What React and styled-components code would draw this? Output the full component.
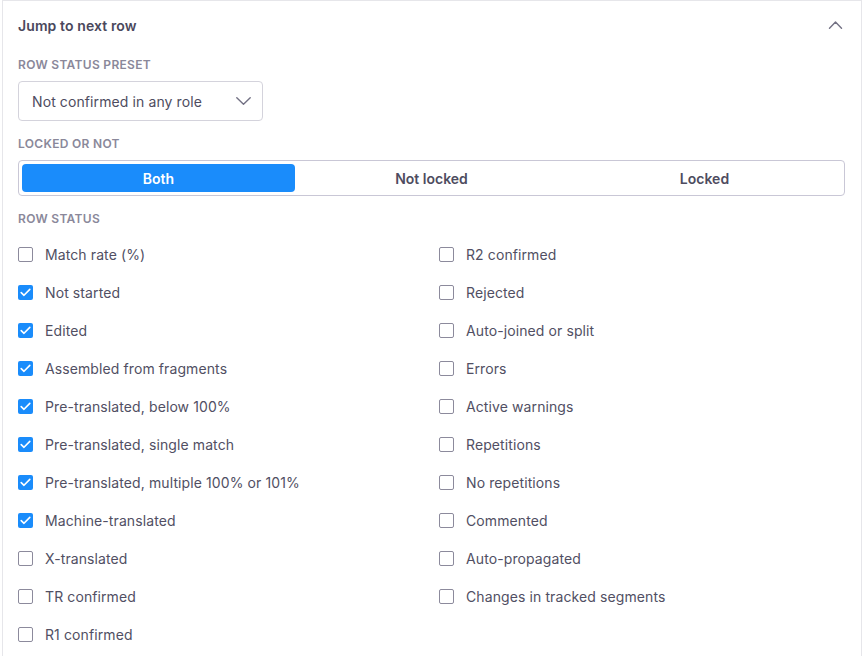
import styled, { createGlobalStyle } from "styled-components";

const GlobalStyle = createGlobalStyle`
  body {
    margin: 0;
    background: #ffffff;
    font-family: Inter, "Noto Sans", "Liberation Sans", sans-serif;
    color: #4e4c60;
  }
`;

const Panel = styled.div`
  margin-left: 2px;
  width: 860px;
  box-sizing: border-box;
  border: 1px solid #e6e6ea;
  border-bottom: none;
  background: #fff;
  padding: 0 16px 20px 15px;
`;

const Header = styled.div`
  height: 48px;
  display: flex;
  align-items: center;
  justify-content: space-between;
`;

const Title = styled.span`
  font-size: 14px;
  font-weight: 600;
  letter-spacing: 0.1px;
  color: #4a485c;
`;

const IconButton = styled.span`
  display: flex;
  align-items: center;
  margin-right: 2px;
`;

const Field = styled.div`
  margin-top: ${(p) => p.$top}px;
`;

const FieldLabel = styled.div`
  font-size: 12px;
  line-height: 16px;
  font-weight: 600;
  letter-spacing: 0.3px;
  text-transform: uppercase;
  color: #8a889a;
  margin-bottom: 8px;
`;

const Select = styled.div`
  width: 245px;
  height: 40px;
  box-sizing: border-box;
  border: 1px solid #d4d3dc;
  border-radius: 4px;
  display: flex;
  align-items: center;
  justify-content: space-between;
  padding: 0 11px 0 13px;
  font-size: 14px;
  letter-spacing: 0.1px;
  color: #4e4c60;
`;

const Toggle = styled.div`
  height: 36px;
  box-sizing: border-box;
  border: 1px solid #c9c7d6;
  border-radius: 4px;
  padding: 3px;
  display: grid;
  grid-template-columns: repeat(3, 1fr);
`;

const ToggleOption = styled.div`
  display: flex;
  align-items: center;
  justify-content: center;
  border-radius: 4px;
  font-size: 14px;
  font-weight: 600;
  background: ${(p) => (p.$active ? "#1a8cfb" : "transparent")};
  color: ${(p) => (p.$active ? "#ffffff" : "#4e4c60")};
`;

const StatusGrid = styled.div`
  display: grid;
  grid-template-columns: 404px 1fr;
  grid-template-rows: repeat(11, 38px);
  grid-auto-flow: column;
  column-gap: 17px;
  margin-top: 3px;
`;

const Option = styled.label`
  display: flex;
  align-items: center;
  font-size: 14px;
  letter-spacing: 0.1px;
  color: #514f63;
`;

const Box = styled.span`
  width: 15px;
  height: 15px;
  box-sizing: border-box;
  border-radius: 2px;
  margin-right: 12px;
  display: flex;
  align-items: center;
  justify-content: center;
  border: ${(p) => (p.$checked ? "none" : "1.5px solid #8c8a9c")};
  background: ${(p) => (p.$checked ? "#1a8cfb" : "#fff")};
`;

const left = [
  ["Match rate (%)", false],
  ["Not started", true],
  ["Edited", true],
  ["Assembled from fragments", true],
  ["Pre-translated, below 100%", true],
  ["Pre-translated, single match", true],
  ["Pre-translated, multiple 100% or 101%", true],
  ["Machine-translated", true],
  ["X-translated", false],
  ["TR confirmed", false],
  ["R1 confirmed", false],
];

const right = [
  "R2 confirmed",
  "Rejected",
  "Auto-joined or split",
  "Errors",
  "Active warnings",
  "Repetitions",
  "No repetitions",
  "Commented",
  "Auto-propagated",
  "Changes in tracked segments",
];

const Chevron = ({ up }) => (
  <svg width="15" height="8" viewBox="0 0 15 8" fill="none">
    <path
      d={up ? "M1.5 7.2L7.5 1L13.5 7.2" : "M0.8 0.8L7.5 7.2L14.2 0.8"}
      stroke="#737184"
      strokeWidth="1.4"
      strokeLinecap="round"
      strokeLinejoin="round"
    />
  </svg>
);

const Checkbox = ({ label, checked }) => (
  <Option>
    <Box $checked={checked}>
      {checked && (
        <svg width="11" height="9" viewBox="0 0 11 9" fill="none">
          <path
            d="M1.2 4.6L4 7.3L9.8 1.4"
            stroke="#fff"
            strokeWidth="1.6"
            strokeLinecap="round"
            strokeLinejoin="round"
          />
        </svg>
      )}
    </Box>
    {label}
  </Option>
);

export default function App() {
  return (
    <>
      <GlobalStyle />
      <Panel>
        <Header>
          <Title>Jump to next row</Title>
          <IconButton>
            <Chevron up />
          </IconButton>
        </Header>

        <Field $top={8}>
          <FieldLabel>Row status preset</FieldLabel>
          <Select>
            Not confirmed in any role
            <Chevron />
          </Select>
        </Field>

        <Field $top={15}>
          <FieldLabel>Locked or not</FieldLabel>
          <Toggle>
            <ToggleOption $active>Both</ToggleOption>
            <ToggleOption>Not locked</ToggleOption>
            <ToggleOption>Locked</ToggleOption>
          </Toggle>
        </Field>

        <Field $top={15}>
          <FieldLabel>Row status</FieldLabel>
          <StatusGrid>
            {left.map(([label, checked]) => (
              <Checkbox key={label} label={label} checked={checked} />
            ))}
            {right.map((label) => (
              <Checkbox key={label} label={label} checked={false} />
            ))}
          </StatusGrid>
        </Field>
      </Panel>
    </>
  );
}
